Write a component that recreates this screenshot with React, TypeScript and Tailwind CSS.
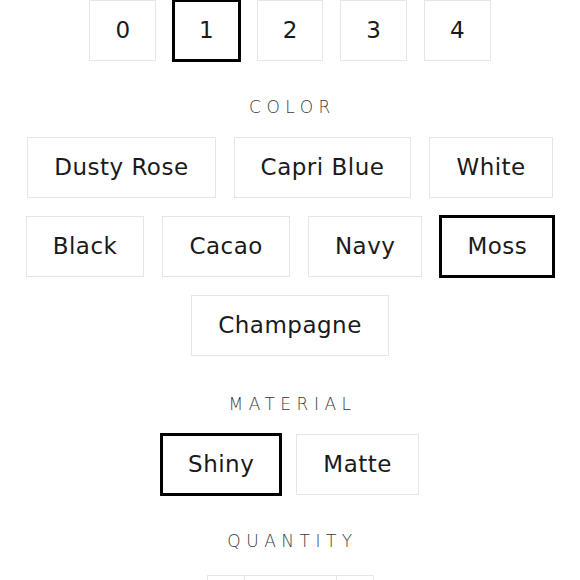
import { useState } from 'react'

const sizes = ['0', '1', '2', '3', '4']
const colors = ['Dusty Rose', 'Capri Blue', 'White', 'Black', 'Cacao', 'Navy', 'Moss', 'Champagne']
const materials = ['Shiny', 'Matte']

function OptionButton({ label, selected, narrow, onClick }: { label: string; selected: boolean; narrow?: boolean; onClick: () => void }) {
  const base = narrow
    ? 'h-[61px] px-[25px] bg-white text-[23px] leading-none text-[#1a1a1a]'
    : 'h-[61px] px-[26px] bg-white text-[23px] leading-none tracking-[0.5px] text-[#1a1a1a]'
  return (
    <button
      type="button"
      onClick={onClick}
      className={
        selected
          ? `${base} border border-black shadow-[0_0_0_1px_#000,inset_0_0_0_1px_#000]`
          : `${base} border border-[#e6e6e2]`
      }
    >
      {label}
    </button>
  )
}

function SectionLabel({ children, className }: { children: string; className: string }) {
  return (
    <div className={`h-[20px] text-center text-[17px] leading-[20px] tracking-[5.5px] pl-[5px] text-[#3a3a3a] font-light ${className}`}>
      {children}
    </div>
  )
}

export default function App() {
  const [size, setSize] = useState('1')
  const [color, setColor] = useState('Moss')
  const [material, setMaterial] = useState('Shiny')
  const [qty, setQty] = useState(1)

  return (
    <div className="w-[580px] h-[580px] overflow-hidden bg-white" style={{ fontFamily: '"DejaVu Sans", sans-serif' }}>
      <div className="px-[25px]">
        {/* サイズ */}
        <div className="flex flex-wrap justify-center gap-[17px]">
          {sizes.map(s => (
            <OptionButton key={s} label={s} narrow selected={size === s} onClick={() => setSize(s)} />
          ))}
        </div>

        {/* カラー */}
        <SectionLabel className="mt-[36px] mb-[20px]">COLOR</SectionLabel>
        <div className="flex flex-wrap justify-center gap-[18px]">
          {colors.map(c => (
            <OptionButton key={c} label={c} selected={color === c} onClick={() => setColor(c)} />
          ))}
        </div>

        {/* 素材 */}
        <SectionLabel className="mt-[38px] mb-[20px]">MATERIAL</SectionLabel>
        <div className="flex flex-wrap justify-center gap-[15px]">
          {materials.map(m => (
            <OptionButton key={m} label={m} selected={material === m} onClick={() => setMaterial(m)} />
          ))}
        </div>

        {/* 数量 */}
        <SectionLabel className="mt-[36px]">QUANTITY</SectionLabel>
        <div className="mt-[24px] flex justify-center">
          <div className="flex h-[56px] border border-[#e6e6e2]">
            <button
              type="button"
              aria-label="decrease"
              onClick={() => setQty(q => Math.max(1, q - 1))}
              className="w-[37px] border-r border-[#e6e6e2] flex items-center justify-center"
            >
              <svg width="12" height="12" viewBox="0 0 12 12" fill="none" stroke="#1a1a1a" strokeWidth="1.5">
                <path d="M1 6h10" />
              </svg>
            </button>
            <input
              aria-label="quantity"
              className="w-[91px] text-center text-[20px] outline-none"
              value={qty}
              onChange={e => setQty(Number(e.target.value) || 1)}
            />
            <button
              type="button"
              aria-label="increase"
              onClick={() => setQty(q => q + 1)}
              className="w-[37px] border-l border-[#e6e6e2] flex items-center justify-center"
            >
              <svg width="12" height="12" viewBox="0 0 12 12" fill="none" stroke="#1a1a1a" strokeWidth="1.5">
                <path d="M1 6h10M6 1v10" />
              </svg>
            </button>
          </div>
        </div>
      </div>
    </div>
  )
}
